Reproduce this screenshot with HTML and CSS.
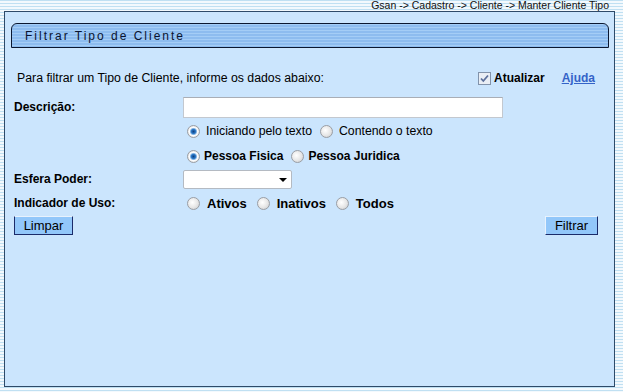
FILE: index.html
```html
<html>
<head>
<meta charset="utf-8">
<link rel="stylesheet" href="styles.css">
</head>
<body>

<div class="crumb">Gsan -&gt; Cadastro -&gt; Cliente -&gt; Manter Cliente Tipo</div>

<div class="panel">
  <div class="title-bar">Filtrar Tipo de Cliente</div>

  <div class="form">
    <div class="row intro">
      <span class="intro-text">Para filtrar um Tipo de Cliente, informe os dados abaixo:</span>
      <span class="refresh">
        <span class="check">
          <svg width="11" height="11" viewBox="0 0 11 11"><path d="M2 5.5 L4.3 8 L9 2.5" fill="none" stroke="#5b6f9c" stroke-width="1.8"/></svg>
        </span>Atualizar
      </span>
      <a class="help" href="#">Ajuda</a>
    </div>

    <div class="row desc">
      <span class="label">Descrição:</span>
      <span class="text-input"></span>
    </div>

    <div class="row opts first">
      <span class="label"></span>
      <span class="option"><span class="radio checked"></span>Iniciando pelo texto</span>
      <span class="option"><span class="radio"></span>Contendo o texto</span>
    </div>

    <div class="row opts second bold">
      <span class="label"></span>
      <span class="option tight"><span class="radio checked"></span>Pessoa Fisica</span>
      <span class="option tight"><span class="radio"></span>Pessoa Juridica</span>
    </div>

    <div class="row esfera">
      <span class="label">Esfera Poder:</span>
      <span class="select"><span class="arrow"></span></span>
    </div>

    <div class="row opts uso big">
      <span class="label">Indicador de Uso:</span>
      <span class="option"><span class="radio"></span>Ativos</span>
      <span class="option"><span class="radio"></span>Inativos</span>
      <span class="option"><span class="radio"></span>Todos</span>
    </div>

    <div class="row buttons">
      <span class="button limpar">Limpar</span>
      <span class="button filtrar">Filtrar</span>
    </div>
  </div>
</div>

</body>
</html>
```

FILE: styles.css
```css
html, body {
  margin: 0;
  padding: 0;
}

body {
  width: 623px;
  height: 392px;
  overflow: hidden;
  font-family: "Liberation Sans", Arial, sans-serif;
  font-size: 12px;
  color: #000;
  background: repeating-linear-gradient(to bottom, #c0e0f2 0px, #c0e0f2 1px, #f3f9fd 1px, #f3f9fd 3px);
}

.crumb {
  height: 11px;
  line-height: 11px;
  font-size: 10.5px;
  text-align: right;
  padding-right: 14px;
  color: #111;
}

.panel {
  margin-left: 4px;
  width: 609px;
  height: 374px;
  border: 1px solid #2e4a68;
  background-color: #cbe5fd;
}

.title-bar {
  margin: 11px 5px 0 6px;
  height: 23px;
  line-height: 24px;
  padding-left: 13px;
  border: 1px solid #0b1830;
  border-radius: 6px 6px 0 0;
  background: repeating-linear-gradient(to bottom, #a4cdf6 0px, #a4cdf6 1px, #8dbcef 1px, #8dbcef 3px);
  font-size: 12px;
  letter-spacing: 2px;
  color: #0a1430;
}

.form {
  padding: 0 16px 0 9px;
}

.row {
  display: flex;
  align-items: center;
}

.label {
  width: 169px;
  flex: none;
  font-weight: bold;
}

.intro {
  margin-top: 20px;
  height: 20px;
}

.intro-text {
  padding-left: 3px;
  font-size: 12.3px;
}

.refresh {
  margin-left: auto;
  display: flex;
  align-items: center;
  font-weight: bold;
}

.check {
  width: 11px;
  height: 11px;
  margin-right: 3px;
  border: 1px solid #8293ab;
  background-color: #e9eef5;
  display: flex;
}

.help {
  margin-left: 17px;
  margin-right: 3px;
  font-weight: bold;
  color: #3463c8;
  text-decoration: underline;
}

.desc {
  margin-top: 7px;
  height: 24px;
}

.text-input {
  width: 318px;
  height: 19px;
  border: 1px solid #c3c8cf;
  border-top-color: #a9aeb6;
  background-color: #fff;
}

.opts {
  height: 22px;
}

.opts.first {
  margin-top: 1px;
}

.opts.second {
  margin-top: 3px;
}

.opts.uso {
  margin-top: 3px;
}

.option {
  display: flex;
  align-items: center;
  margin-right: 8px;
  font-size: 12.3px;
}

.label + .option {
  margin-left: 4px;
}

.bold .option {
  font-weight: bold;
  font-size: 12px;
}

.big .option {
  font-weight: bold;
  font-size: 13px;
}

.radio {
  width: 11px;
  height: 11px;
  margin-right: 6px;
  border-radius: 50%;
  border: 1px solid #9a9ea4;
  background: radial-gradient(circle at 40% 40%, #ffffff 0%, #e6e6e6 55%, #c4c6c9 100%);
}

.tight .radio {
  margin-right: 4px;
}

.uso .radio {
  margin-right: 7px;
}

.uso .option {
  margin-right: 10px;
}

.radio.checked {
  background: radial-gradient(circle, #0f3f80 0%, #2b78c6 28%, #9fc4ea 42%, #ffffff 52%, #e4e4e4 75%, #c4c6c9 100%);
}

.esfera {
  margin-top: 2px;
  height: 20px;
}

.select {
  width: 107px;
  height: 17px;
  border: 1px solid #b4bac2;
  border-radius: 2px;
  background-color: #fff;
  display: flex;
  align-items: center;
  justify-content: flex-end;
}

.arrow {
  width: 0;
  height: 0;
  margin-right: 4px;
  margin-top: 2px;
  border-left: 4px solid transparent;
  border-right: 4px solid transparent;
  border-top: 4px solid #000;
}

.buttons {
  margin-top: 2px;
  height: 20px;
  justify-content: space-between;
  align-items: flex-start;
}

.button {
  height: 17px;
  line-height: 17px;
  text-align: center;
  background-color: #92c7fa;
  border: 1px solid #1b2b6a;
  border-top-color: #e8f2fd;
  border-left-color: #e8f2fd;
  font-size: 13px;
}

.limpar {
  width: 57px;
  border-left-color: #1b2b6a;
}

.filtrar {
  width: 51px;
}
```
